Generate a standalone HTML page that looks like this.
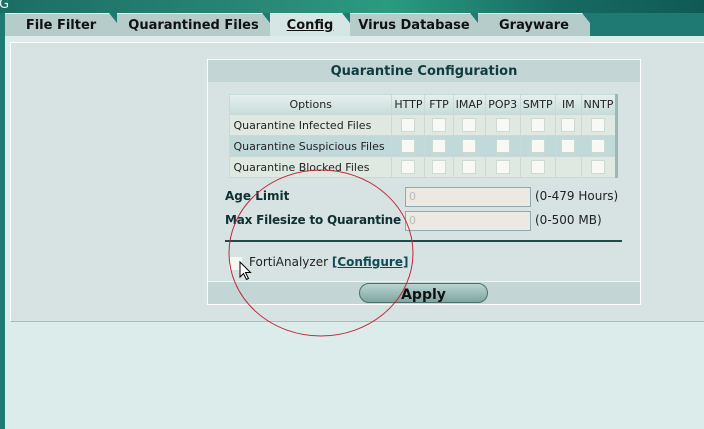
<!DOCTYPE html>
<html><head><style>
*{margin:0;padding:0;box-sizing:border-box}
body{width:704px;height:429px;overflow:hidden;background:#dbeceb;font-family:"DejaVu Sans","Liberation Sans",sans-serif;position:relative}
.a{position:absolute}
.tab{position:absolute;top:13px;height:23px;background:#b5cccb;font-weight:bold;font-size:13px;color:#111;text-align:center;line-height:24px;border-top:1px solid #e8f2f1;clip-path:polygon(0 0,calc(100% - 8px) 0,100% 10px,100% 100%,0 100%)}
.t{font-size:11px;color:#222}
table{table-layout:fixed}
td,th{border:1px solid #c9d9d8;height:21px;font-size:11px;font-weight:normal;color:#222;padding:0;white-space:nowrap;overflow:hidden}
th{height:20px}
.cb{display:inline-block;width:14px;height:14px;background:#f8f8f4;border:1px solid #d0d8d2;vertical-align:middle}
</style></head><body>
<div class="a" style="left:0;top:0;width:704px;height:13px;background:linear-gradient(90deg,#1b6d64,#2a8a78 40%,#2a9c80 55%,#166a62 80%,#0f5a55)"></div>
<div class="a" style="left:-1px;top:-3px;color:#e8f4f0;font-size:13px">G</div>
<div class="a" style="left:0;top:13px;width:704px;height:23px;background:#1f7a74"></div>
<div class="a" style="left:0;top:13px;width:5px;height:416px;background:#1f7a74"></div>
<div class="tab" style="left:5px;width:112px">File Filter</div>
<div class="tab" style="left:117px;width:153px">Quarantined Files</div>
<div class="tab" style="left:270px;width:80px;background:#d6e6e4;text-decoration:underline">Config</div>
<div class="tab" style="left:350px;width:128px">Virus Database</div>
<div class="tab" style="left:478px;width:112px">Grayware</div>
<div class="a" style="left:5px;top:36px;width:699px;height:6px;background:#dbeceb"></div>
<div class="a" style="left:10px;top:42px;width:694px;height:280px;background:#d6e3e2;border-top:1px solid #fff;border-left:1px solid #fff;border-bottom:1px solid #a8bcbb"></div>
<div class="a" style="left:207px;top:59px;width:434px;height:246px;background:#d6e3e2;border:1px solid #fff"></div>
<div class="a" style="left:208px;top:60px;width:432px;height:22px;background:#c3d6d5;text-align:center;font-weight:bold;font-size:13px;color:#0f3b3f;line-height:24px">Quarantine Configuration</div>
<table class="a" style="left:229px;top:94px;width:389px;border-collapse:collapse;border-right:3px solid #9ab8b6">
<colgroup><col style="width:162px"><col style="width:33px"><col style="width:28px"><col style="width:32px"><col style="width:35px"><col style="width:35px"><col style="width:26px"><col style="width:35px"></colgroup>
<tr style="background:linear-gradient(#e4f0ee,#c8dcd9)"><th>Options</th><th>HTTP</th><th>FTP</th><th>IMAP</th><th>POP3</th><th>SMTP</th><th>IM</th><th>NNTP</th></tr>
<tr style="background:#dfe9e2"><td>&nbsp;Quarantine Infected Files</td><td align=center><span class=cb></span></td><td align=center><span class=cb></span></td><td align=center><span class=cb></span></td><td align=center><span class=cb></span></td><td align=center><span class=cb></span></td><td align=center><span class=cb></span></td><td align=center><span class=cb></span></td></tr>
<tr style="background:#c2d9d9"><td>&nbsp;Quarantine Suspicious Files</td><td align=center><span class=cb></span></td><td align=center><span class=cb></span></td><td align=center><span class=cb></span></td><td align=center><span class=cb></span></td><td align=center><span class=cb></span></td><td align=center><span class=cb></span></td><td align=center><span class=cb></span></td></tr>
<tr style="background:#dfe9e2"><td>&nbsp;Quarantine Blocked Files</td><td align=center><span class=cb></span></td><td align=center><span class=cb></span></td><td align=center><span class=cb></span></td><td align=center><span class=cb></span></td><td align=center><span class=cb></span></td><td></td><td align=center><span class=cb></span></td></tr>
</table>
<div class="a" style="left:225px;top:189px;font-weight:bold;font-size:12px;color:#0f2f33">Age Limit</div>
<div class="a" style="left:225px;top:213px;font-weight:bold;font-size:12px;color:#0f2f33;letter-spacing:-0.2px">Max Filesize to Quarantine</div>
<div class="a" style="left:405px;top:187px;width:126px;height:20px;background:#ece9e3;border:1px solid #8ea9b0;font-size:11px;color:#bbb;padding:2px 3px">0</div>
<div class="a" style="left:405px;top:211px;width:126px;height:20px;background:#ece9e3;border:1px solid #8ea9b0;font-size:11px;color:#bbb;padding:2px 3px">0</div>
<div class="a t" style="left:535px;top:189px;font-size:12px">(0-479 Hours)</div>
<div class="a t" style="left:535px;top:213px;font-size:12px">(0-500 MB)</div>
<div class="a" style="left:225px;top:240px;width:397px;height:2px;background:#1f4a48"></div>
<div class="a" style="left:229px;top:257px;width:13px;height:13px;background:#f6f7f3"></div>
<div class="a t" style="left:249px;top:255px;font-size:12px">FortiAnalyzer <b style="color:#0f4a55;text-decoration:underline">[Configure]</b></div>
<div class="a" style="left:208px;top:281px;width:432px;height:23px;background:#c3d6d5;border-top:1px solid #eef5f4"></div>
<div class="a" style="left:359px;top:283px;width:129px;height:20px;border-radius:10px;background:linear-gradient(#b8d4d0,#7fa6a2);border:1px solid #4f6f6c;text-align:center;font-weight:bold;font-size:14px;line-height:22px;color:#111">Apply</div>
<svg class="a" style="left:0;top:0" width="704" height="429"><path d="M240 262 l0 15 l3.5 -3.5 l3 6 l2 -1 l-3 -6 l5 0 z" fill="#fff" stroke="#000" stroke-width="1"/><ellipse cx="321" cy="253" rx="92" ry="83" fill="none" stroke="#c0283a" stroke-width="1"/></svg>
</body></html>
